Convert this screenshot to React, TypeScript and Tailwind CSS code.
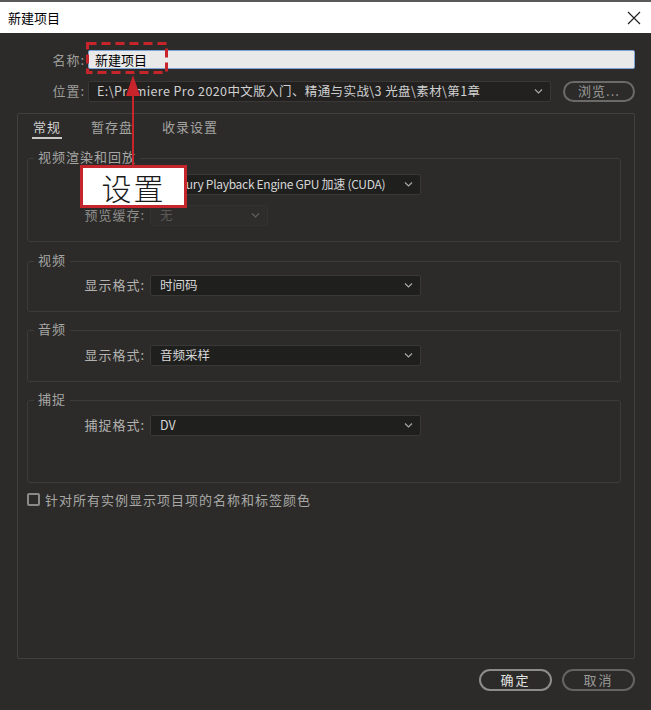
import React from 'react';

const Chevron = () => (
  <svg width="9" height="5" viewBox="0 0 9 5" className="shrink-0">
    <path d="M1 0.5 L4.5 4 L8 0.5" fill="none" stroke="#a8a8a8" strokeWidth="1.2" />
  </svg>
);

const Select = ({ value, width, disabled = false, tight = false }: { value: string; width: string; disabled?: boolean; tight?: boolean }) => (
  <div
    className={`${width} h-[21px] flex items-center justify-between pl-[9px] pr-[7px] rounded-[2px] border ${
      tight ? 'text-[12px] tracking-[-0.3px]' : 'text-[12.5px]'
    } ${disabled ? 'bg-[#2e2d2b] border-[#333230] text-[#5a5a58]' : 'bg-[#1f1f1e] border-[#393836] text-[#d6d6d6]'}`}
  >
    <span className="truncate">{value}</span>
    {disabled ? <span className="opacity-40 flex"><Chevron /></span> : <Chevron />}
  </div>
);

const Row = ({
  label,
  value,
  width = 'w-[271px]',
  disabled = false,
  tight = false,
}: { label: string; value: string; width?: string; disabled?: boolean; tight?: boolean }) => (
  <div className="flex items-center">
    <span className={`w-[122px] text-right pr-[5px] tracking-[1px] ${disabled ? 'text-[#8c8c8a]' : 'text-[#b2b2b0]'}`}>{label}</span>
    <Select value={value} width={width} disabled={disabled} tight={tight} />
  </div>
);

const Group = ({ title, children, className }: { title: string; children: React.ReactNode; className: string }) => (
  <div className={`relative border border-[#3d3c3a] rounded-[3px] ${className}`}>
    <span className="absolute -top-[11px] left-[6px] px-[4px] bg-[#2c2b29] text-[#a6a6a4] tracking-[1px] leading-[18px]">
      {title}
    </span>
    {children}
  </div>
);

export default function App() {
  return (
    <div className="relative w-[651px] h-[710px] bg-[#2c2b29] flex flex-col text-[13px] font-['Noto_Sans_CJK_SC','Noto_Sans',sans-serif]">
      {/* title bar */}
      <div className="h-[33px] bg-white border-t-2 border-[#5a5a5a] flex items-center justify-between pl-[8px] pr-[10px] text-black">
        <span>新建项目</span>
        <svg width="14" height="14" viewBox="0 0 14 14">
          <path d="M1 1 L13 13 M13 1 L1 13" stroke="#222" strokeWidth="1.2" />
        </svg>
      </div>

      {/* name */}
      <div className="flex items-center mt-[17px]">
        <span className="w-[88px] text-right pr-[3px] text-[#9c9c9a] tracking-[1px]">名称:</span>
        <div className="w-[547px] h-[19px] bg-[#e9e9e9] border border-[#7ea3d6] rounded-[2px] flex items-center pl-[6px] text-black">
          新建项目
        </div>
      </div>

      {/* location */}
      <div className="flex items-center mt-[11px]">
        <span className="w-[88px] text-right pr-[3px] text-[#9c9c9a] tracking-[1px]">位置:</span>
        <div className="w-[463px] h-[21px] bg-[#222120] border border-[#393836] rounded-[2px] flex items-center justify-between pl-[8px] pr-[7px] text-[#d0d0d0] text-[12.5px]">
          <span className="tracking-[0.4px]">E:\Premiere Pro 2020中文版入门、精通与实战\3 光盘\素材\第1章</span>
          <Chevron />
        </div>
        <div className="ml-[12px] w-[72px] h-[21px] rounded-full border-2 border-[#6a6a68] flex items-center justify-center text-[#9a9a98] tracking-[1px]">
          浏览...
        </div>
      </div>

      {/* settings panel */}
      <div className="ml-[17px] mt-[11px] w-[618px] h-[546px] border border-[#424140] rounded-[2px] flex flex-col pl-[9px]">
        <div className="flex items-end h-[25px] pl-[5px] gap-[29px] tracking-[1px] text-[#a4a4a2]">
          <span className="text-[#d0d0d0] border-b-2 border-[#c8c8c8] pb-[1px] leading-[18px] px-[1px]">常规</span>
          <span className="leading-[18px] pb-[3px]">暂存盘</span>
          <span className="leading-[18px] pb-[3px]">收录设置</span>
        </div>

        <Group title="视频渲染和回放" className="mt-[19px] w-[594px] h-[84px] pt-[15px] flex flex-col gap-[10px]">
          <Row label="渲染程序:" value="Mercury Playback Engine GPU 加速 (CUDA)" tight />
          <Row label="预览缓存:" value="无" width="w-[118px]" disabled />
        </Group>

        <Group title="视频" className="mt-[19px] w-[594px] h-[51px] pt-[13px]">
          <Row label="显示格式:" value="时间码" />
        </Group>

        <Group title="音频" className="mt-[18px] w-[594px] h-[52px] pt-[14px]">
          <Row label="显示格式:" value="音频采样" />
        </Group>

        <Group title="捕捉" className="mt-[18px] w-[594px] h-[83px] pt-[14px]">
          <Row label="捕捉格式:" value="DV" />
        </Group>

        <div className="flex items-center mt-[7px] gap-[5px]">
          <div className="w-[13px] h-[13px] border-2 border-[#8a8a88] rounded-[2px]" />
          <span className="text-[#a8a8a6] tracking-[1px]">针对所有实例显示项目项的名称和标签颜色</span>
        </div>
      </div>

      {/* buttons */}
      <div className="flex justify-end gap-[10px] mt-[10px] pr-[16px]">
        <div className="w-[73px] h-[22px] rounded-full border-2 border-[#8c8c8a] flex items-center justify-center text-[#e2e2e2] tracking-[2px]">
          确定
        </div>
        <div className="w-[73px] h-[22px] rounded-full border-2 border-[#646462] flex items-center justify-center text-[#9a9a98] tracking-[2px]">
          取消
        </div>
      </div>

      {/* annotation overlay */}
      <svg className="absolute left-0 top-0 pointer-events-none" width="651" height="710">
        <rect x="87.5" y="43.5" width="79" height="29" fill="none" stroke="#c8242b" strokeWidth="3" strokeDasharray="9 5" />
        <line x1="133" y1="92" x2="133" y2="166" stroke="#c8242b" strokeWidth="2" />
        <polygon points="133,75 126,96 140,96" fill="#c8242b" />
      </svg>
      <div className="absolute left-[80px] top-[165px] w-[107px] h-[43px] bg-white border-[3px] border-[#c5262d] flex items-center justify-center text-[30px] leading-none text-[#1a1a1a] font-light tracking-[2px]">
        设置
      </div>
    </div>
  );
}
